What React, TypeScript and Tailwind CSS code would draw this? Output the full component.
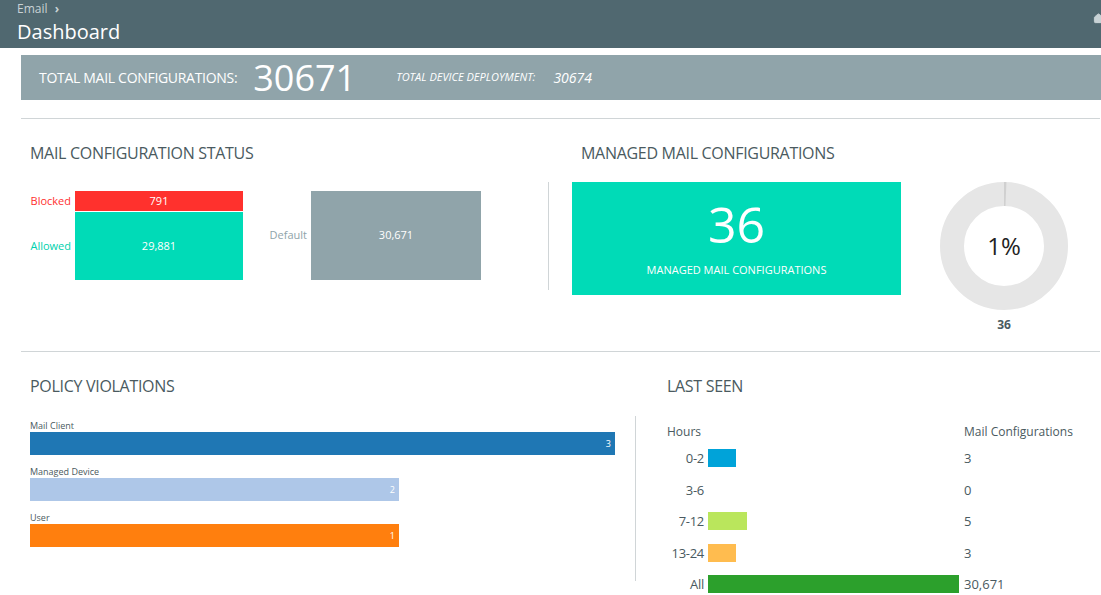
import { Home } from "lucide-react";

const font = { fontFamily: '"Open Sans", "DejaVu Sans", sans-serif' };

const violations = [
  { label: "Mail Client", value: 3, w: "w-[585px]", bg: "bg-[#1f77b4]" },
  { label: "Managed Device", value: 2, w: "w-[369px]", bg: "bg-[#aec7e8]" },
  { label: "User", value: 1, w: "w-[369px]", bg: "bg-[#ff7f0e]" },
];

const lastSeen = [
  { h: "0-2", w: "w-[28px]", bg: "bg-[#00a3d9]", v: "3" },
  { h: "3-6", w: "w-0", bg: "", v: "0" },
  { h: "7-12", w: "w-[39px]", bg: "bg-[#bae65c]", v: "5" },
  { h: "13-24", w: "w-[28px]", bg: "bg-[#ffbc4f]", v: "3" },
  { h: "All", w: "w-[251px]", bg: "bg-[#2ca02c]", v: "30,671" },
];

export default function App() {
  return (
    <div className="w-[1101px] h-[595px] overflow-hidden bg-white text-[#4a5a60]" style={font}>
      <div className="h-[48px] bg-[#506870] px-[17px] pt-[1px] relative">
        <div className="text-[12px] text-[#c8d2d5] leading-[16px]">Email <span className="ml-1 font-bold">›</span></div>
        <div className="text-[20px] text-white leading-[30px]">Dashboard</div>
        <Home className="absolute right-[-3px] top-[13px] w-[11px] h-[11px] text-[#c8d2d5]" fill="#c8d2d5" />
      </div>
      <div className="ml-[21px] mt-[7px] h-[45px] bg-[#90a4aa] flex items-center px-[18px] text-white">
        <span className="text-[14px] tracking-[-0.3px]">TOTAL MAIL CONFIGURATIONS:</span>
        <span className="text-[36px] ml-[16px] leading-none">30671</span>
        <span className="text-[11px] italic ml-[40px]">TOTAL DEVICE DEPLOYMENT:</span>
        <span className="text-[14px] italic ml-[18px]">30674</span>
      </div>
      <div className="ml-[21px] mr-[1px] mt-[18px] border-t border-[#d0d5d7]" />
      <div className="flex h-[232px]">
        <div className="w-[549px] pl-[30px] pt-[22px] relative">
          <div className="text-[16px] tracking-[-0.3px]">MAIL CONFIGURATION STATUS</div>
          <div className="flex mt-[26px] text-[11px]">
            <div className="w-[45px] flex flex-col items-end pr-[4px]">
              <div className="h-[20px] leading-[20px] text-[#ff3030]">Blocked</div>
              <div className="h-[69px] leading-[69px] text-[#00d1ad]">Allowed</div>
            </div>
            <div className="w-[168px] flex flex-col">
              <div className="h-[21px] bg-[#ff312d] text-white flex items-center justify-center border-b border-white">791</div>
              <div className="h-[68px] bg-[#00dbb7] text-white flex items-center justify-center">29,881</div>
            </div>
            <div className="w-[68px] flex items-center justify-end pr-[4px] text-[#90a4aa]">Default</div>
            <div className="w-[170px] h-[89px] bg-[#90a4aa] text-white flex items-center justify-center">30,671</div>
          </div>
          <div className="absolute right-0 top-[63px] h-[108px] border-r border-[#d0d5d7]" />
        </div>
        <div className="flex-1 pt-[22px] pl-[32px]">
          <div className="text-[16px] tracking-[-0.3px]">MANAGED MAIL CONFIGURATIONS</div>
          <div className="flex mt-[17px] -ml-[9px]">
            <div className="w-[329px] h-[113px] bg-[#00dbb7] text-white flex flex-col items-center pt-[12px]">
              <div className="text-[50px] leading-[60px]">36</div>
              <div className="text-[11px] mt-[8px]">MANAGED MAIL CONFIGURATIONS</div>
            </div>
            <div className="ml-[39px] flex flex-col items-center">
              <svg width="128" height="128" viewBox="0 0 128 128">
                <circle cx="64" cy="64" r="52" fill="none" stroke="#e6e6e6" strokeWidth="24" />
                <circle cx="64" cy="64" r="52" fill="none" stroke="#d0d0d0" strokeWidth="24" strokeDasharray="2 400" transform="rotate(-90 64 64)" />
                <text x="64" y="73" textAnchor="middle" fontSize="24" fill="#222">1%</text>
              </svg>
              <div className="text-[12px] font-bold mt-[6px]">36</div>
            </div>
          </div>
        </div>
      </div>
      <div className="ml-[21px] mr-[1px] border-t border-[#d0d5d7]" />
      <div className="flex">
        <div className="w-[636px] pl-[30px] pt-[22px] h-[228px] relative">
          <div className="text-[16px] tracking-[-0.3px]">POLICY VIOLATIONS</div>
          <div className="mt-[21px] flex flex-col gap-[10px]">
            {violations.map((v) => (
              <div key={v.label}>
                <div className="text-[9px] leading-[13px]">{v.label}</div>
                <div className={`${v.w} ${v.bg} h-[23px] text-white text-[9px] flex items-center justify-end pr-[4px]`}>{v.value}</div>
              </div>
            ))}
          </div>
          <div className="absolute right-0 top-[64px] h-[165px] border-r border-[#d0d5d7]" />
        </div>
        <div className="flex-1 pl-[31px] pt-[22px]">
          <div className="text-[16px] tracking-[-0.3px]">LAST SEEN</div>
          <div className="mt-[25px] text-[12px]">
            <div className="flex h-[26px] items-start">
              <div className="w-[297px]">Hours</div>
              <div className="whitespace-nowrap">Mail Configurations</div>
            </div>
            {lastSeen.map((r) => (
              <div key={r.h} className="flex h-[31.5px] items-start">
                <div className="w-[41px] text-right pr-[4px] text-[13px] whitespace-nowrap tracking-[-0.3px]">{r.h}</div>
                <div className="w-[256px]"><div className={`${r.w} ${r.bg} h-[18px]`} /></div>
                <div className="text-[13px]">{r.v}</div>
              </div>
            ))}
          </div>
        </div>
      </div>
    </div>
  );
}
